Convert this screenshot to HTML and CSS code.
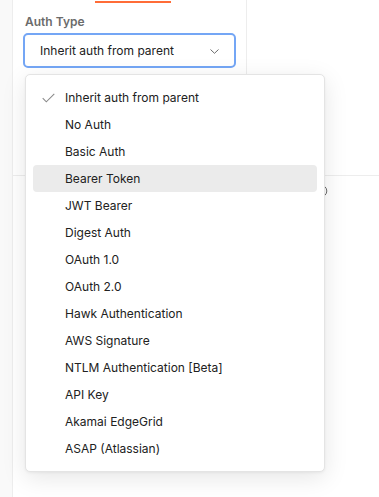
FILE: index.html
```html
<!DOCTYPE html>
<html lang="en">
<head>
    <meta charset="UTF-8">
    <meta name="viewport" content="width=device-width, initial-scale=1.0">
    <title>Authorization</title>
    <link rel="stylesheet" href="styles.css">
</head>
<body>
    <div class="app">
        <aside class="sidebar"></aside>

        <main class="main">
            <div class="top">
                <div class="auth-col">
                    <div class="tab-line"></div>
                    <div class="field-label">Auth Type</div>

                    <div class="select-wrap">
                        <div class="select">
                            <span>Inherit auth from parent</span>
                            <svg class="chevron" width="9" height="5" viewBox="0 0 9 5">
                                <path d="M0.5 0.5 L4.5 4.3 L8.5 0.5" fill="none" stroke="#6b6b6b" stroke-width="1"/>
                            </svg>
                        </div>

                        <ul class="menu">
                            <li class="menu-item selected">
                                <span class="check">
                                    <svg width="13" height="10" viewBox="0 0 13 10">
                                        <path d="M0.7 5.2 L4.3 8.8 L12.3 0.8" fill="none" stroke="#8a8a8a" stroke-width="1.1"/>
                                    </svg>
                                </span>
                                Inherit auth from parent
                            </li>
                            <li class="menu-item"><span class="check"></span>No Auth</li>
                            <li class="menu-item"><span class="check"></span>Basic Auth</li>
                            <li class="menu-item hover"><span class="check"></span>Bearer Token</li>
                            <li class="menu-item"><span class="check"></span>JWT Bearer</li>
                            <li class="menu-item"><span class="check"></span>Digest Auth</li>
                            <li class="menu-item"><span class="check"></span>OAuth 1.0</li>
                            <li class="menu-item"><span class="check"></span>OAuth 2.0</li>
                            <li class="menu-item"><span class="check"></span>Hawk Authentication</li>
                            <li class="menu-item"><span class="check"></span>AWS Signature</li>
                            <li class="menu-item"><span class="check"></span>NTLM Authentication [Beta]</li>
                            <li class="menu-item"><span class="check"></span>API Key</li>
                            <li class="menu-item"><span class="check"></span>Akamai EdgeGrid</li>
                            <li class="menu-item"><span class="check"></span>ASAP (Atlassian)</li>
                        </ul>
                    </div>
                </div>
                <div class="right-col"></div>
            </div>

            <div class="bottom">
                <div class="info-row">
                    <svg width="14" height="14" viewBox="0 0 14 14">
                        <circle cx="7" cy="7" r="5.8" fill="none" stroke="#6b6b6b" stroke-width="1"/>
                        <path d="M7 6.2 V10" stroke="#6b6b6b" stroke-width="1"/>
                        <circle cx="7" cy="4.3" r="0.7" fill="#6b6b6b"/>
                    </svg>
                </div>
            </div>
        </main>
    </div>
</body>
</html>
```

FILE: styles.css
```css
* {
    margin: 0;
    padding: 0;
    box-sizing: border-box;
}

body {
    font-family: 'Inter', 'Noto Sans', sans-serif;
    font-size: 12px;
    color: #212121;
    background: #ffffff;
}

.app {
    display: flex;
    min-height: 497px;
}

.sidebar {
    width: 13px;
    background: #f9f9f9;
    border-right: 1px solid #ededed;
}

.main {
    flex: 1;
    display: flex;
    flex-direction: column;
}

.top {
    display: flex;
    height: 176px;
    border-bottom: 1px solid #ededed;
}

.auth-col {
    width: 234px;
    border-right: 1px solid #ededed;
}

.tab-line {
    margin: 1px 0 0 82px;
    width: 76px;
    height: 2px;
    background: #ff6c37;
}

.field-label {
    margin: 11px 0 0 12px;
    font-weight: 600;
    color: #6b6b6b;
    line-height: 16px;
}

.select-wrap {
    position: relative;
    margin: 3px 0 0 10px;
    width: 213px;
}

.select {
    display: flex;
    align-items: center;
    justify-content: space-between;
    height: 35px;
    padding: 0 15px 0 15px;
    border: 2px solid #74a6f5;
    border-radius: 5px;
    background: #ffffff;
}

.chevron {
    margin-top: 1px;
}

.menu {
    position: absolute;
    top: 41px;
    left: 2px;
    width: 300px;
    padding: 9px 7px;
    list-style: none;
    background: #ffffff;
    border: 1px solid #e4e4e4;
    border-radius: 5px;
    box-shadow: 0 6px 24px rgba(0, 0, 0, 0.10), 0 1px 3px rgba(0, 0, 0, 0.05);
    z-index: 10;
}

.menu-item {
    display: flex;
    align-items: center;
    height: 27px;
    border-radius: 4px;
    line-height: 16px;
}

.menu-item.hover {
    background: #ebebeb;
}

.check {
    display: flex;
    align-items: center;
    width: 32px;
    padding-left: 9px;
}

.bottom {
    flex: 1;
}

.info-row {
    display: flex;
    justify-content: flex-end;
    padding: 8px 51px 0 0;
}
```
